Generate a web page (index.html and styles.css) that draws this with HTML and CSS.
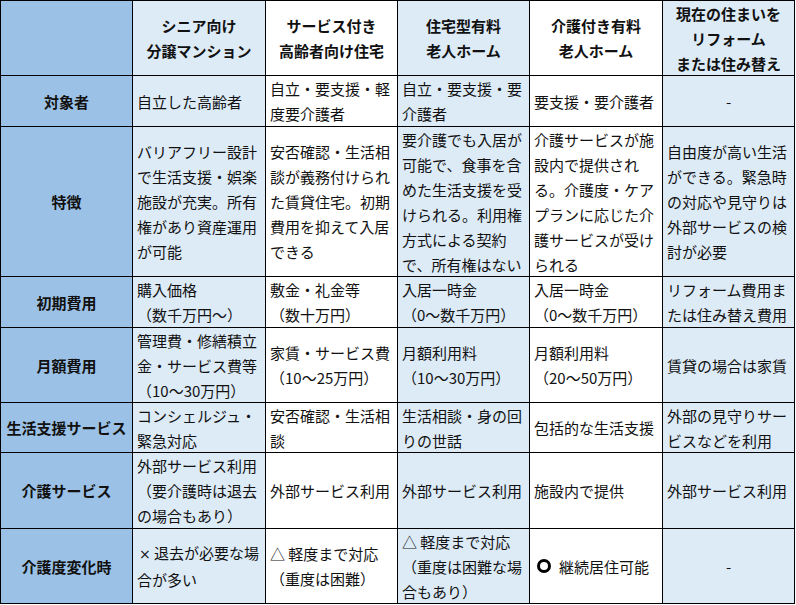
FILE: index.html
```html
<!DOCTYPE html>
<html lang="ja">
<head>
<meta charset="utf-8">
<title>住まいの比較</title>
<link rel="stylesheet" href="styles.css">
</head>
<body>
<div class="table">
  <div class="cell label"></div>
  <div class="cell head alt">シニア向け<br>分譲マンション</div>
  <div class="cell head">サービス付き<br>高齢者向け住宅</div>
  <div class="cell head alt">住宅型有料<br>老人ホーム</div>
  <div class="cell head">介護付き有料<br>老人ホーム</div>
  <div class="cell head alt">現在の住まいを<br>リフォーム<br>または住み替え</div>

  <div class="cell label">対象者</div>
  <div class="cell alt">自立した高齢者</div>
  <div class="cell">自立・要支援・軽<br>度要介護者</div>
  <div class="cell alt">自立・要支援・要<br>介護者</div>
  <div class="cell">要支援・要介護者</div>
  <div class="cell alt center">-</div>

  <div class="cell label">特徴</div>
  <div class="cell alt">バリアフリー設計<br>で生活支援・娯楽<br>施設が充実。所有<br>権があり資産運用<br>が可能</div>
  <div class="cell">安否確認・生活相<br>談が義務付けられ<br>た賃貸住宅。初期<br>費用を抑えて入居<br>できる</div>
  <div class="cell alt">要介護でも入居が<br>可能で、食事を含<br>めた生活支援を受<br>けられる。利用権<br>方式による契約<br>で、所有権はない</div>
  <div class="cell">介護サービスが施<br>設内で提供され<br>る。介護度・ケア<br>プランに応じた介<br>護サービスが受け<br>られる</div>
  <div class="cell alt">自由度が高い生活<br>ができる。緊急時<br>の対応や見守りは<br>外部サービスの検<br>討が必要</div>

  <div class="cell label">初期費用</div>
  <div class="cell alt">購入価格<br>（数千万円～）</div>
  <div class="cell">敷金・礼金等<br>（数十万円）</div>
  <div class="cell alt">入居一時金<br>（0～数千万円）</div>
  <div class="cell">入居一時金<br>（0～数千万円）</div>
  <div class="cell alt">リフォーム費用ま<br>たは住み替え費用</div>

  <div class="cell label">月額費用</div>
  <div class="cell alt">管理費・修繕積立<br>金・サービス費等<br>（10～30万円）</div>
  <div class="cell">家賃・サービス費<br>（10～25万円）</div>
  <div class="cell alt">月額利用料<br>（10～30万円）</div>
  <div class="cell">月額利用料<br>（20～50万円）</div>
  <div class="cell alt">賃貸の場合は家賃</div>

  <div class="cell label">生活支援サービス</div>
  <div class="cell alt">コンシェルジュ・<br>緊急対応</div>
  <div class="cell">安否確認・生活相<br>談</div>
  <div class="cell alt">生活相談・身の回<br>りの世話</div>
  <div class="cell">包括的な生活支援</div>
  <div class="cell alt">外部の見守りサー<br>ビスなどを利用</div>

  <div class="cell label">介護サービス</div>
  <div class="cell alt">外部サービス利用<br>（要介護時は退去<br>の場合もあり）</div>
  <div class="cell">外部サービス利用</div>
  <div class="cell alt">外部サービス利用</div>
  <div class="cell">施設内で提供</div>
  <div class="cell alt">外部サービス利用</div>

  <div class="cell label">介護度変化時</div>
  <div class="cell alt"><div class="txt"><span class="mark">×</span> 退去が必要な場<br>合が多い</div></div>
  <div class="cell">△ 軽度まで対応<br>（重度は困難）</div>
  <div class="cell alt">△ 軽度まで対応<br>（重度は困難な場<br>合もあり）</div>
  <div class="cell row"><span class="ring"></span><span>継続居住可能</span></div>
  <div class="cell alt center">-</div>
</div>
</body>
</html>
```
FILE: styles.css
```css
html, body {
  margin: 0;
  padding: 0;
  background: #ffffff;
}

.table {
  display: grid;
  width: 795px;
  box-sizing: border-box;
  padding: 1px;
  gap: 1px;
  background: #000000;
  grid-template-columns: 131px 132px 131px 131px 132px 131px;
  grid-template-rows: 74px 50px 149px 50px 74px 49px 75px 74px;
  font-family: "Noto Sans CJK JP", "Noto Sans", sans-serif;
  font-size: 15px;
  line-height: 25px;
  color: #111111;
}

.cell {
  background: #ffffff;
  display: flex;
  flex-direction: column;
  justify-content: center;
  padding: 0 0 0 4px;
  white-space: nowrap;
  overflow: visible;
}

.cell.alt {
  background: #ddebf7;
}

.cell.label {
  background: #9bc2e6;
  font-weight: bold;
  align-items: center;
  text-align: center;
  padding: 0;
}

.cell.head {
  font-weight: bold;
  text-align: center;
  align-items: center;
  padding: 0;
}

.cell.center {
  text-align: center;
  align-items: center;
  padding: 0;
}

.cell.row {
  flex-direction: row;
  align-items: center;
  justify-content: flex-start;
}

.mark {
  font-family: "DejaVu Sans", sans-serif;
  font-size: 14px;
  margin-left: 2px;
}

.ring {
  display: inline-block;
  box-sizing: border-box;
  width: 14px;
  height: 14px;
  border: 3px solid #000000;
  border-radius: 50%;
  margin: 0 8px 0 3px;
}
```
